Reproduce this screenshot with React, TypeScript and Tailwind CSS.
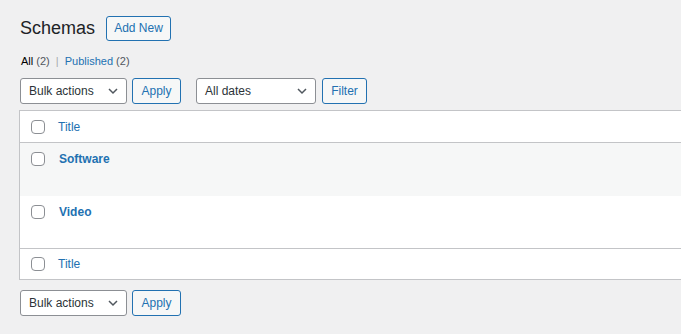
import React from 'react';

const font = { fontFamily: '"Liberation Sans", Arial, sans-serif' };

const Chevron = () => (
  <svg width="10" height="10" viewBox="0 0 10 10" className="absolute right-[8px] top-1/2 -translate-y-1/2 text-[#50575e]">
    <path d="M1 3l4 4 4-4" fill="none" stroke="currentColor" strokeWidth="1.5" />
  </svg>
);

const Select: React.FC<{ label: string; width: string }> = ({ label, width }) => (
  <div className={`relative h-[26px] ${width} rounded-[3px] border border-[#8c8f94] bg-white pl-2 text-[12px] leading-[24px] text-[#2c3338]`}>
    {label}
    <Chevron />
  </div>
);

const Button: React.FC<{ label: string; width: string }> = ({ label, width }) => (
  <div className={`h-[26px] ${width} rounded-[3px] border border-[#2271b1] bg-[#f6f7f7] text-center text-[12px] leading-[24px] text-[#2271b1]`}>
    {label}
  </div>
);

const Check = () => <div className="h-[14px] w-[14px] shrink-0 rounded-[4px] border border-[#8c8f94] bg-white" />;

const Row: React.FC<{ title: string; height: string; alt?: boolean }> = ({ title, height, alt }) => (
  <div className={`flex ${height} items-start ${alt ? 'bg-[#f6f7f7]' : 'bg-white'}`}>
    <div className="pl-[11px] pt-[9px]">
      <Check />
    </div>
    <div className="pl-[14px] pt-[7px] text-[12px] font-bold text-[#2271b1]">{title}</div>
  </div>
);

export default function App() {
  return (
    <div className="h-[334px] w-[681px] overflow-hidden bg-[#f0f0f1]" style={font}>
      <div className="flex items-center pl-5 pt-[15px]">
        <h1 className="text-[18px] leading-[26px] text-[#1d2327]">Schemas</h1>
        <div className="ml-[11px] h-[25px] w-[65px] rounded-[3px] border border-[#2271b1] bg-[#f6f7f7] text-center text-[12px] leading-[23px] text-[#2271b1]">
          Add New
        </div>
      </div>
      <div className="mt-[11px] pl-[21px] text-[11px] leading-[18px] text-[#50575e]">
        <span className="text-black">All</span> (2) <span className="px-[3px] text-[#a7aaad]">|</span>{' '}
        <span className="text-[#2271b1]">Published</span> (2)
      </div>
      <div className="mt-[8px] flex pl-5">
        <Select label="Bulk actions" width="w-[107px]" />
        <div className="ml-[5px]"><Button label="Apply" width="w-[49px]" /></div>
        <div className="ml-[15px]"><Select label="All dates" width="w-[120px]" /></div>
        <div className="ml-[6px]"><Button label="Filter" width="w-[45px]" /></div>
      </div>
      <div className="ml-[19px] mt-[6px] w-[700px] border border-[#c3c4c7] bg-white">
        <div className="flex h-[32px] items-center border-b border-[#c3c4c7]">
          <div className="pl-[11px]"><Check /></div>
          <div className="pl-[13px] text-[12px] text-[#2271b1]">Title</div>
        </div>
        <Row title="Software" height="h-[53px]" alt />
        <Row title="Video" height="h-[52px]" />
        <div className="flex h-[31px] items-center border-t border-[#c3c4c7]">
          <div className="pl-[11px]"><Check /></div>
          <div className="pl-[13px] text-[12px] text-[#2271b1]">Title</div>
        </div>
      </div>
      <div className="mt-[10px] flex pl-5">
        <Select label="Bulk actions" width="w-[107px]" />
        <div className="ml-[5px]"><Button label="Apply" width="w-[49px]" /></div>
      </div>
    </div>
  );
}
